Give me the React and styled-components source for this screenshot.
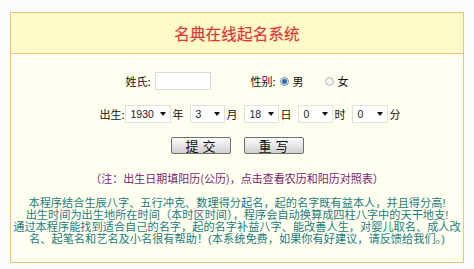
import styled, { createGlobalStyle } from "styled-components";

const GlobalStyle = createGlobalStyle`
  html, body {
    margin: 0;
    padding: 0;
    background: #fbfcfc;
  }
  body {
    font-family: "Noto Sans CJK SC", "Liberation Sans", sans-serif;
  }
`;

const Page = styled.div`
  width: 474px;
  height: 269px;
  padding: 12px 0 0 10px;
  box-sizing: border-box;
`;

const Panel = styled.div`
  width: 454px;
  height: 251px;
  box-sizing: border-box;
  border: 1px solid #f3c274;
  background: #fffff0;
  display: flex;
  flex-direction: column;
`;

const Header = styled.div`
  height: 40px;
  border-bottom: 1px solid #f3c274;
  background: #fffbc9;
  display: flex;
  align-items: center;
  justify-content: center;
`;

const Title = styled.h1`
  margin: 0 0 1px;
  font-size: 15.5px;
  font-weight: normal;
  color: #e3343c;
  letter-spacing: 0.2px;
  -webkit-text-stroke: 0.2px #e3343c;
`;

const Body = styled.div`
  display: flex;
  flex-direction: column;
  align-items: center;
  padding-top: 18px;
`;

const Row = styled.div`
  display: flex;
  align-items: center;
  height: 18px;
  margin-top: ${(p) => p.$top || 0}px;
  padding-left: ${(p) => p.$shift || 0}px;
  font-size: 11px;
  color: #111;
`;

const Label = styled.span`
  margin-right: ${(p) => p.$gap ?? 3}px;
  margin-left: ${(p) => p.$left || 0}px;
  white-space: nowrap;
`;

const TextInput = styled.div`
  width: 56px;
  height: 18px;
  box-sizing: border-box;
  border: 1px solid #dcdcd4;
  background: #fff;
`;

const RadioDot = styled.span`
  width: 9px;
  height: 9px;
  box-sizing: border-box;
  border-radius: 50%;
  border: 1px solid ${(p) => (p.$on ? "#7c8a96" : "#b9bcbe")};
  background: ${(p) =>
    p.$on
      ? "radial-gradient(circle, #1d6fb0 0 2px, #9fc3de 2.6px, #eef2f5 3.4px)"
      : "radial-gradient(circle, #f4f4f4 0 2px, #e2e2e2 4px)"};
  margin-right: 4px;
  margin-left: ${(p) => p.$left || 0}px;
`;

const Select = styled.div`
  width: ${(p) => p.$w || 35}px;
  height: 18px;
  box-sizing: border-box;
  border: 1px solid #e2e2da;
  background: #fff;
  display: flex;
  align-items: center;
  justify-content: space-between;
  padding: 0 4px 0 5px;
  margin-right: 2px;
  font-family: "Liberation Sans", sans-serif;
  font-size: 10.5px;
  color: #222;
`;

const Arrow = styled.span`
  width: 0;
  height: 0;
  border-left: 3px solid transparent;
  border-right: 3px solid transparent;
  border-top: 4px solid #111;
`;

const Unit = styled.span`
  margin-right: ${(p) => p.$gap ?? 6}px;
`;

const ButtonRow = styled.div`
  display: flex;
  gap: 13px;
  margin-top: 14px;
`;

const Button = styled.button`
  width: 60px;
  height: 17px;
  padding: 0;
  box-sizing: border-box;
  border: 1px solid #6f6f6f;
  border-radius: 2px;
  background: linear-gradient(#fdfdfd, #e6e6e6 50%, #cfcfcf);
  font-family: "Noto Sans CJK SC", sans-serif;
  font-size: 13px;
  line-height: 15px;
  color: #111;
  letter-spacing: 4px;
  text-indent: 4px;
`;

const Note = styled.p`
  margin: 18px 0 0;
  font-size: 11px;
  line-height: 13px;
  color: #7c1c72;
`;

const Intro = styled.div`
  margin-top: 12px;
  display: flex;
  flex-direction: column;
  align-items: center;
  font-family: "Liberation Sans", "Noto Sans CJK SC", sans-serif;
  font-size: 11.2px;
  line-height: 12px;
  color: #1b7b7d;
`;

const IntroLine = styled.span`
  white-space: nowrap;
`;

const introLines = [
  "本程序结合生辰八字、五行冲克、数理得分起名，起的名字既有益本人，并且得分高!",
  "出生时间为出生地所在时间（本时区时间），程序会自动换算成四柱八字中的天干地支!",
  "通过本程序能找到适合自己的名字，起的名字补益八字、能改善人生，对婴儿取名、成人改",
  "名、起笔名和艺名及小名很有帮助！(本系统免费，如果你有好建议，请反馈给我们。)",
];

export default function App() {
  return (
    <>
      <GlobalStyle />
      <Page>
        <Panel>
          <Header>
            <Title>名典在线起名系统</Title>
          </Header>
          <Body>
            <Row>
              <Label $gap={4}>姓氏:</Label>
              <TextInput />
              <Label $left={40} $gap={4}>性别:</Label>
              <RadioDot $on />
              <Label $gap={0}>男</Label>
              <RadioDot $left={21} />
              <Label $gap={0}>女</Label>
            </Row>
            <Row $top={15} $shift={26}>
              <Label $gap={0}>出生:</Label>
              <Select $w={46}>
                1930
                <Arrow />
              </Select>
              <Unit>年</Unit>
              <Select>
                3<Arrow />
              </Select>
              <Unit>月</Unit>
              <Select>
                18<Arrow />
              </Select>
              <Unit>日</Unit>
              <Select>
                0<Arrow />
              </Select>
              <Unit>时</Unit>
              <Select $w={36}>
                0<Arrow />
              </Select>
              <Unit $gap={0}>分</Unit>
            </Row>
            <ButtonRow>
              <Button>提交</Button>
              <Button>重写</Button>
            </ButtonRow>
            <Note>（注：出生日期填阳历(公历)，点击查看农历和阳历对照表）</Note>
            <Intro>
              {introLines.map((line) => (
                <IntroLine key={line}>{line}</IntroLine>
              ))}
            </Intro>
          </Body>
        </Panel>
      </Page>
    </>
  );
}
